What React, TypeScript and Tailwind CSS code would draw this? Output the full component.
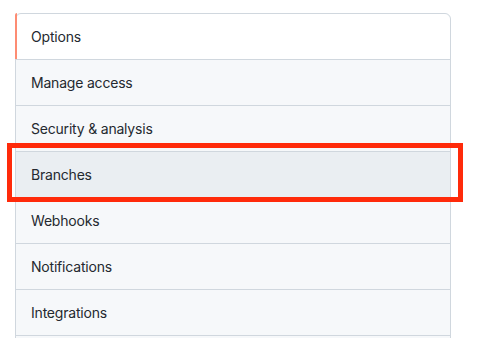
import React from "react";

const items = [
  "Options",
  "Manage access",
  "Security & analysis",
  "Branches",
  "Webhooks",
  "Notifications",
  "Integrations",
  "",
];

export default function App() {
  return (
    <div
      className="relative w-[478px] h-[338px] overflow-hidden bg-white"
      style={{ fontFamily: "Inter, 'Liberation Sans', sans-serif" }}
    >
      <div className="pt-[13px] pl-[15px]">
        <nav className="w-[436px] rounded-md border border-[#d0d7de] bg-[#f6f8fa]">
          {items.map((label, i) => (
            <div
              key={i}
              className={
                "relative flex items-center pl-[15px] text-[14px] tracking-[-0.2px] text-[#24292f] " +
                (i === 0
                  ? "h-[45px] rounded-t-md bg-white"
                  : i === 3
                  ? "h-[46px] border-t border-[#d0d7de] bg-[#eaeef2]"
                  : "h-[46px] border-t border-[#d0d7de] bg-[#f6f8fa]")
              }
            >
              {i === 0 && (
                <span className="absolute -left-px -top-px bottom-0 w-[2px] rounded-tl-md bg-[#fd8c73]" />
              )}
              {label}
            </div>
          ))}
        </nav>
      </div>
      <div className="absolute left-[7px] top-[143px] h-[59px] w-[456px] border-[5px] border-[#ff2a0a]" />
    </div>
  );
}
